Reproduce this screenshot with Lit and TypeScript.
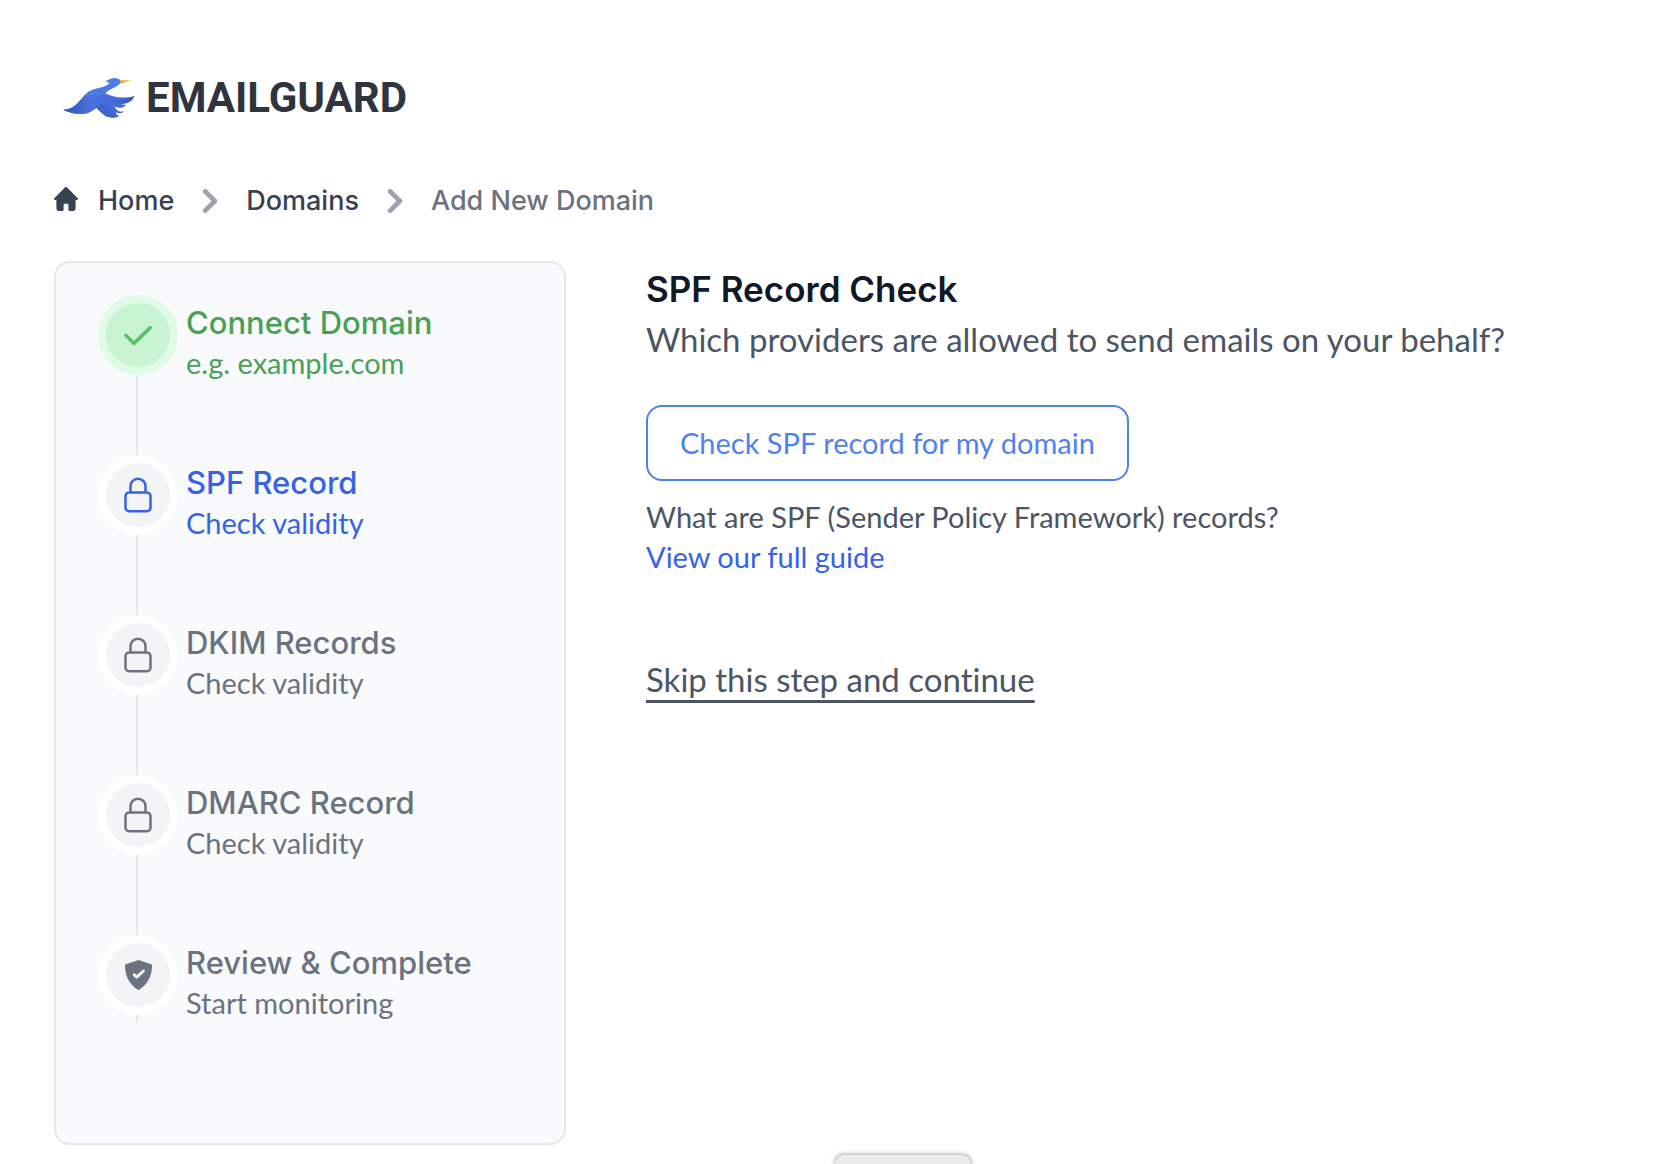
import { LitElement, html, css } from "lit";
import { customElement, property } from "lit/decorators.js";
import { classMap } from "lit/directives/class-map.js";

type StepState = "done" | "active" | "pending";
type StepIcon = "check" | "lock" | "shield";

interface Step {
  title: string;
  hint: string;
  state: StepState;
  icon: StepIcon;
}

const STEPS: Step[] = [
  { title: "Connect Domain", hint: "e.g. example.com", state: "done", icon: "check" },
  { title: "SPF Record", hint: "Check validity", state: "active", icon: "lock" },
  { title: "DKIM Records", hint: "Check validity", state: "pending", icon: "lock" },
  { title: "DMARC Record", hint: "Check validity", state: "pending", icon: "lock" },
  { title: "Review & Complete", hint: "Start monitoring", state: "pending", icon: "shield" },
];

const ICONS = {
  check: html`<svg width="28" height="21" viewBox="0 0 16 12" fill="none" aria-hidden="true">
    <path d="M1 5.917 5.724 10.5 15 1.5" stroke="currentColor" stroke-width="2" stroke-linecap="round" stroke-linejoin="round" />
  </svg>`,
  lock: html`<svg width="40" height="40" viewBox="0 0 24 24" fill="none" aria-hidden="true">
    <path
      d="M16.5 10.5V6.75a4.5 4.5 0 1 0-9 0v3.75m-.75 11.25h10.5a2.25 2.25 0 0 0 2.25-2.25v-6.75a2.25 2.25 0 0 0-2.25-2.25H6.75a2.25 2.25 0 0 0-2.25 2.25v6.75a2.25 2.25 0 0 0 2.25 2.25Z"
      stroke="currentColor" stroke-width="1.5" stroke-linecap="round" stroke-linejoin="round" />
  </svg>`,
  shield: html`<svg width="27" height="30" viewBox="0 0 27 30" fill="none" aria-hidden="true">
    <path
      d="M12.9.2q.6-.3 1.2 0L26.2 4.2q.8.3.8 1.1C27 16 23 24 14.2 29.8q-.7.4-1.4 0C4 24 0 16 0 5.3q0-.8.8-1.1Z"
      fill="currentColor" />
    <path d="M9.2 14.8 11.8 17.2 18.4 11" stroke="#f3f4f6" stroke-width="3" stroke-linecap="round" stroke-linejoin="round" />
  </svg>`,
};

@customElement("brand-logo")
export class BrandLogo extends LitElement {
  static styles = css`
    :host {
      display: flex;
    }
    .brand {
      display: flex;
      align-items: center;
      gap: 11px;
      height: 40px;
      color: #2f343f;
      text-decoration: none;
      font: 700 42px/40px Roboto, "Liberation Sans", sans-serif;
    }
    .mark {
      display: block;
      flex: none;
    }
  `;

  render() {
    return html`<a class="brand" href="#home">
      <svg class="mark" width="72" height="40" viewBox="24 24 216 120" aria-hidden="true">
        <defs>
          <linearGradient id="body" x1="0" y1="0" x2="0" y2="1">
            <stop offset="0" stop-color="#5580e8" />
            <stop offset="1" stop-color="#3f62d4" />
          </linearGradient>
          <linearGradient id="tail" x1="0" y1="0" x2="1" y2="0">
            <stop offset="0" stop-color="#3151b5" />
            <stop offset="1" stop-color="#5079e4" />
          </linearGradient>
          <linearGradient id="wing" x1="0" y1="0" x2="1" y2="0">
            <stop offset="0" stop-color="#4f76e6" />
            <stop offset="1" stop-color="#3757bd" />
          </linearGradient>
          <linearGradient id="beak" x1="0" y1="0" x2="1" y2="0">
            <stop offset="0" stop-color="#d9a52c" />
            <stop offset="1" stop-color="#f8dc74" />
          </linearGradient>
        </defs>
        <path fill="url(#beak)" d="M194 31Q212 29 230 30Q214 36 197 42Z" />
        <path
          fill="url(#body)"
          d="M152 33Q163 29 170 25Q184 22 193 28Q199 35 194 42C184 53 160 58 151 70C162 75 180 82 196 82C214 83 228 82 238 78C233 93 218 101 198 102C203 104 209 105 213 104C205 115 191 116 177 109C185 120 190 128 206 124C203 131 193 131 182 127C184 134 188 138 192 138C178 147 155 143 145 133C137 127 132 121 125 114C109 123 99 132 79 132C58 132 42 127 24 119C52 119 66 103 83 82C96 65 111 59 128 55C145 51 158 47 163 39C159 35 155 37 152 33Z" />
        <path fill="url(#tail)" d="M24 119C52 119 62 106 76 90C91 86 107 92 125 114C109 123 99 132 79 132C58 132 42 127 24 119Z" />
        <path fill="url(#wing)" d="M110 66C144 66 158 87 196 88C214 88 228 84 238 78C233 93 218 101 198 102C168 102 150 78 110 66Z" />
        <path fill="#4063d2" d="M145 100C157 118 166 133 192 138C178 147 155 143 145 133C137 127 132 121 125 114Z" />
        <path fill="#5580e8" d="M86 79C100 66 128 63 150 76C136 72 112 72 86 79Z" />
      </svg>
      <span>EMAILGUARD</span>
    </a>`;
  }
}

@customElement("step-item")
export class StepItem extends LitElement {
  @property({ attribute: false }) step!: Step;

  static styles = css`
    :host {
      display: block;
    }
    .step {
      display: flex;
      gap: 8px;
      color: #6b7280;
    }
    .dot {
      box-sizing: border-box;
      display: flex;
      flex: none;
      align-items: center;
      justify-content: center;
      width: 80px;
      height: 80px;
      border: 8px solid #ffffff;
      border-radius: 50%;
      background: #f3f4f6;
    }
    .label {
      padding-top: 8px;
    }
    .title {
      margin: 0;
      font: 500 31px/40px Inter, "Liberation Sans", sans-serif;
    }
    .hint {
      margin: 0;
      font: 400 29px/40px Lato, "Liberation Sans", sans-serif;
      font-variant-ligatures: none;
    }
    .done {
      color: #48a154;
    }
    .done .dot {
      color: #5ac168;
      border-color: #e1fae8;
      background: #c8f4d4;
    }
    .active {
      color: #3662e8;
    }
  `;

  render() {
    const { title, hint, state, icon } = this.step;
    return html`<div class=${classMap({ step: true, [state]: true })}>
      <span class="dot">${ICONS[icon]}</span>
      <div class="label">
        <h3 class="title">${title}</h3>
        <p class="hint">${hint}</p>
      </div>
    </div>`;
  }
}

@customElement("app-root")
export class AppRoot extends LitElement {
  static styles = css`
    :host {
      display: block;
      min-height: 100vh;
      background: #ffffff;
      color: #4b5563;
      font: 400 29px/40px Lato, "Liberation Sans", sans-serif;
      font-variant-ligatures: none;
    }
    .page {
      padding: 78px 54px 19px;
    }
    .brand {
      padding-left: 9px;
    }
    .crumbs {
      display: flex;
      align-items: center;
      gap: 24px;
      margin: 63px 0 40px;
      padding: 0;
      list-style: none;
      font: 500 27px/40px Inter, "Liberation Sans", sans-serif;
      color: #6b7280;
    }
    .crumb {
      display: flex;
      align-items: center;
      gap: 24px;
    }
    .crumb-link {
      display: flex;
      align-items: center;
      gap: 20px;
      color: #374151;
      text-decoration: none;
    }
    .home-icon {
      margin-bottom: 4px;
    }
    .chevron {
      color: #9ca3af;
    }
    .layout {
      display: grid;
      grid-template-columns: minmax(0, 512px) minmax(0, 1fr);
      gap: 80px;
      align-items: start;
    }
    .card {
      padding: 32px 32px 120px 80px;
      border: 2px solid #e5e7eb;
      border-radius: 16px;
      background: #f9fafc;
    }
    .steps {
      display: grid;
      gap: 72px;
      margin: 0;
      padding: 0;
      border-left: 2px solid #e5e7eb;
      list-style: none;
    }
    .steps-row {
      margin-left: -40px;
    }
    .main {
      display: flex;
      flex-direction: column;
      align-items: flex-start;
      padding-top: 4px;
    }
    .heading {
      margin: 0;
      color: #111827;
      font: 600 35px/48px Inter, "Liberation Sans", sans-serif;
    }
    .lead {
      margin: 0 0 40px;
      font-size: 33px;
      line-height: 52px;
    }
    .check {
      height: 76px;
      padding: 0 32px;
      border: 2px solid #4f81f1;
      border-radius: 16px;
      background: #ffffff;
      color: #4f81f1;
      font: inherit;
      cursor: pointer;
    }
    .about {
      margin: 16px 0 0;
    }
    .guide {
      color: #3662e8;
      text-decoration: none;
    }
    .skip {
      margin-top: 78px;
      color: inherit;
      font-size: 33px;
      line-height: 48px;
      text-decoration: underline;
      text-decoration-thickness: 3px;
      text-underline-offset: 8px;
      text-decoration-skip-ink: none;
    }
    .dock {
      position: fixed;
      bottom: 0;
      left: 835px;
      width: 136px;
      height: 9px;
      border-radius: 10px 10px 0 0;
      background: #ebebea;
      box-shadow: 0 0 4px 1px rgba(0, 0, 0, 0.35);
    }
  `;

  private chevron() {
    return html`<svg class="chevron" width="24" height="24" viewBox="0 0 10 10" fill="none" aria-hidden="true">
      <path d="m3 9 4-4-4-4" stroke="currentColor" stroke-width="2" stroke-linecap="round" stroke-linejoin="round" />
    </svg>`;
  }

  render() {
    return html`<div class="page">
        <brand-logo class="brand"></brand-logo>
        <nav aria-label="Breadcrumb">
          <ol class="crumbs">
            <li>
              <a class="crumb-link" href="#home">
                <svg class="home-icon" width="24" height="24" viewBox="0 0 20 20" fill="currentColor" aria-hidden="true">
                  <path
                    d="m19.707 9.293-2-2-7-7a1 1 0 0 0-1.414 0l-7 7-2 2a1 1 0 0 0 1.414 1.414L2 10.414V18a2 2 0 0 0 2 2h3a1 1 0 0 0 1-1v-4a1 1 0 0 1 1-1h2a1 1 0 0 1 1 1v4a1 1 0 0 0 1 1h3a2 2 0 0 0 2-2v-7.586l.293.293a1 1 0 0 0 1.414-1.414Z" />
                </svg>
                Home
              </a>
            </li>
            <li class="crumb">${this.chevron()}<a class="crumb-link" href="#domains">Domains</a></li>
            <li class="crumb" aria-current="page">${this.chevron()}<span>Add New Domain</span></li>
          </ol>
        </nav>
        <div class="layout">
          <aside class="card">
            <ol class="steps">
              ${STEPS.map((step) => html`<li class="steps-row"><step-item .step=${step}></step-item></li>`)}
            </ol>
          </aside>
          <main class="main">
            <h1 class="heading">SPF Record Check</h1>
            <p class="lead">Which providers are allowed to send emails on your behalf?</p>
            <button class="check" type="button">Check SPF record for my domain</button>
            <p class="about">What are SPF (Sender Policy Framework) records?</p>
            <a class="guide" href="#guide">View our full guide</a>
            <a class="skip" href="#dkim">Skip this step and continue</a>
          </main>
        </div>
      </div>
      <div class="dock"></div>`;
  }
}
